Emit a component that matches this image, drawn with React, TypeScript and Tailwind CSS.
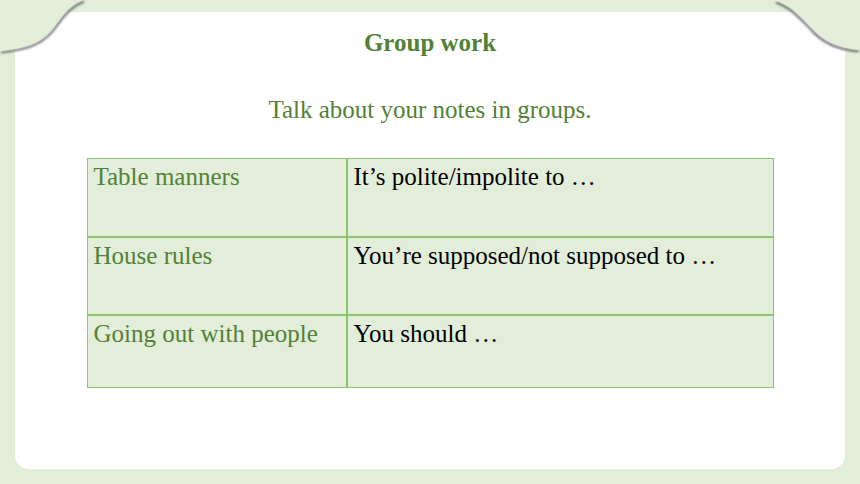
import React from "react";

const rows = [
  ["Table manners", "It\u2019s polite/impolite to \u2026", "h-[77px]"],
  ["House rules", "You\u2019re supposed/not supposed to \u2026", "h-[78px]"],
  ["Going out with people", "You should \u2026", "h-[73px]"],
];

export default function App() {
  return (
    <div className="relative w-[860px] h-[484px] bg-[#e2eed8] overflow-hidden pt-[12px] px-[15px]" style={{ fontFamily: '"Liberation Serif", "Times New Roman", serif' }}>
      <div className="w-[830px] h-[457px] bg-white rounded-[14px] flex flex-col items-center pt-[16px]">
        <div className="text-[25px] leading-[29px] font-bold text-[#538135]">Group work</div>
        <div className="mt-[38px] text-[25px] leading-[29px] text-[#538135]">Talk about your notes in groups.</div>
        <div className="mt-[34px] w-[687px] border border-[#8fc46e] bg-[#e2eed9] flex flex-col">
          {rows.map((r, i) => (
            <div key={i} className={`flex ${r[2]} ${i > 0 ? "border-t-2 border-[#8fc46e]" : ""}`}>
              <div className="w-[260px] border-r-2 border-[#8fc46e] pl-[6px] pt-[3px] text-[25px] leading-[29px] text-[#538135]">{r[0]}</div>
              <div className="flex-1 pl-[6px] pt-[3px] text-[25px] leading-[29px] text-black">{r[1]}</div>
            </div>
          ))}
        </div>
      </div>
      <svg className="absolute left-0 top-0" width="100" height="70" viewBox="0 0 100 70">
        <defs>
          <filter id="blurL" x="-20%" y="-20%" width="140%" height="140%">
            <feGaussianBlur stdDeviation="1" />
          </filter>
        </defs>
        <path d="M0 51 C 28 48, 44 42, 56 24 C 64 12, 72 4, 83 0" fill="none" stroke="#666" strokeWidth="2" filter="url(#blurL)" transform="translate(1,1.5)" />
        <path d="M0 0 L83 0 C 72 4, 64 12, 56 24 C 44 42, 28 48, 0 51 Z" fill="#e2eed8" />
      </svg>
      <svg className="absolute right-0 top-0" width="100" height="70" viewBox="0 0 100 70">
        <defs>
          <filter id="blurR" x="-20%" y="-20%" width="140%" height="140%">
            <feGaussianBlur stdDeviation="1" />
          </filter>
        </defs>
        <path d="M17 1 C 32 6, 42 18, 52 28 C 62 40, 78 48, 100 50" fill="none" stroke="#666" strokeWidth="2" filter="url(#blurR)" transform="translate(-1,1.5)" />
        <path d="M100 0 L17 0 L17 1 C 32 6, 42 18, 52 28 C 62 40, 78 48, 100 50 Z" fill="#e2eed8" />
      </svg>
    </div>
  );
}
